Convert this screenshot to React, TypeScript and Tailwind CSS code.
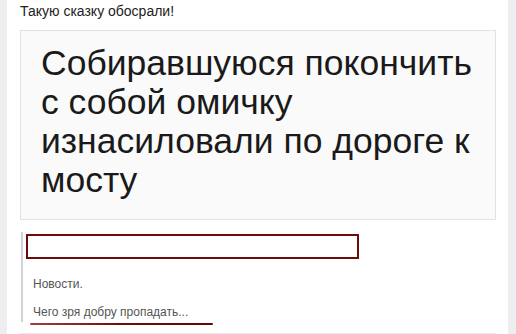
export default function App() {
  return (
    <div className="flex h-[334px] w-[516px] overflow-hidden bg-white" style={{ fontFamily: '"Liberation Sans", Arial, sans-serif' }}>
      {/* left page strip */}
      <div className="w-[7px] shrink-0 bg-[#edeef0]" />

      {/* post body */}
      <div className="flex w-[501px] flex-col pl-[13px] pr-[12px]">
        <div className="pt-[2px] text-[14px] leading-[19px] text-[#222]">Такую сказку обосрали!</div>

        {/* picture with text */}
        <div className="mt-[9px] h-[190px] w-[476px] border border-[#e2e2e2] bg-[#fafafa] pl-[20px] pt-[13px]">
          <p className="text-[35.5px] leading-[39px] text-[#1a1a1a]">
            Собиравшуюся покончить
            <br />с собой омичку
            <br />
            изнасиловали по дороге к
            <br />
            мосту
          </p>
        </div>

        {/* repost quote */}
        <div className="mt-[12px] ml-[1px] flex w-[475px] flex-col border-l-2 border-[#cfd3d8] pl-[3px] pt-[2px] pb-[2px]">
          <div className="h-[25px] w-[333px] border-2 border-[#6e0b0b] bg-white" />
          <div className="mt-[17px] pl-[7px] text-[12px] leading-[16px] text-[#555]">Новости.</div>
          <div className="mt-[12px] pl-[7px] text-[12px] leading-[16px] text-[#555]">Чего зря добру пропадать...</div>
        </div>
        <div className="ml-[10px] mt-[1px] h-[2px] w-[183px] rounded-full bg-gradient-to-r from-[#a04040] via-[#6e0b0b] to-[#5a0a0a]" />
        <div className="mt-[8px] h-px w-[476px] bg-[#e7e8ec]" />
      </div>

      {/* right page strip */}
      <div className="flex-1 bg-[#edeef0]" />
    </div>
  );
}
